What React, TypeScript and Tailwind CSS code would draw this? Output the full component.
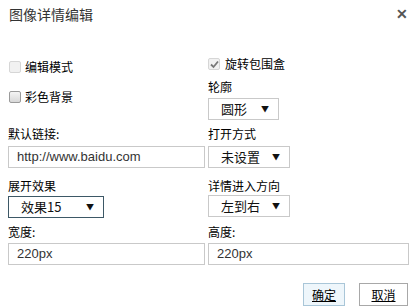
import React from "react";

const font = "font-['Noto_Sans_CJK_SC','Noto_Sans_CJK_SC',sans-serif]";

function Box({ checked, dim }: { checked?: boolean; dim?: boolean }) {
  return (
    <span
      className={`inline-flex items-center justify-center w-[12px] h-[12px] rounded-[2px] border ${
        dim ? "border-[#d6d6d6] bg-[#f1f1f1]" : "border-[#9a9a9a] bg-gradient-to-b from-[#f4f4f4] to-[#d8d8d8]"
      }`}
    >
      {checked && (
        <svg width="9" height="9" viewBox="0 0 9 9">
          <path d="M1 4.5 L3.5 7 L8 1.5" stroke="#777" strokeWidth="1.8" fill="none" />
        </svg>
      )}
    </span>
  );
}

function Select({ value, w, dark }: { value: string; w: string; dark?: boolean }) {
  return (
    <div
      className={`${w} h-[22px] flex items-center justify-between pl-[12px] pr-[9px] bg-white border ${
        dark ? "border-[#3d5866]" : "border-[#c9c9c9]"
      } text-[13px] text-[#111]`}
    >
      <span>{value}</span>
      <span className="text-[8px] leading-none">▼</span>
    </div>
  );
}

function Input({ value, w }: { value: string; w: string }) {
  return (
    <div className={`${w} h-[22px] flex items-center pl-[8px] border border-[#c9c9c9] bg-white text-[13px] text-[#333] font-['Liberation_Sans',sans-serif]`}>
      {value}
    </div>
  );
}

export default function App() {
  return (
    <div className={`w-[416px] h-[306px] bg-white ${font} text-[12px] text-black leading-[14px]`}>
      {/* header */}
      <div className="flex items-center justify-between pl-[9px] pr-[8px] pt-[6px] h-[22px]">
        <span className="text-[14px] text-[#333]">图像详情编辑</span>
        <span className="text-[14px] font-bold text-[#555] font-['Liberation_Sans',sans-serif]">✕</span>
      </div>

      {/* top section */}
      <div className="grid grid-cols-[200px_1fr] mt-[35px]">
        <div className="pl-[9px] flex flex-col">
          <label className="flex items-center gap-[4px] h-[14px] mt-[3px]">
            <Box dim />
            <span>编辑模式</span>
          </label>
          <label className="flex items-center gap-[4px] h-[14px] mt-[16px]">
            <Box />
            <span>彩色背景</span>
          </label>
        </div>
        <div className="pl-[8px] flex flex-col">
          <label className="flex items-center gap-[5px] h-[14px]">
            <Box checked dim />
            <span>旋转包围盒</span>
          </label>
          <span className="mt-[9px]">轮廓</span>
          <div className="mt-[4px]">
            <Select value="圆形" w="w-[71px]" />
          </div>
        </div>
      </div>

      {/* rows */}
      <div className="grid grid-cols-[200px_1fr] mt-[7px] gap-y-[7px]">
        <div className="pl-[8px] flex flex-col gap-[5px]">
          <span>默认链接:</span>
          <Input value="http://www.baidu.com" w="w-[197px]" />
        </div>
        <div className="pl-[8px] flex flex-col gap-[5px]">
          <span>打开方式</span>
          <Select value="未设置" w="w-[82px]" />
        </div>

        <div className="pl-[8px] flex flex-col gap-[3px] mt-[4px]">
          <span>展开效果</span>
          <Select value="效果15" w="w-[96px]" dark />
        </div>
        <div className="pl-[8px] flex flex-col gap-[2px] mt-[4px]">
          <span>详情进入方向</span>
          <Select value="左到右" w="w-[82px]" />
        </div>

        <div className="pl-[8px] flex flex-col gap-[4px]">
          <span>宽度:</span>
          <Input value="220px" w="w-[197px]" />
        </div>
        <div className="pl-[8px] flex flex-col gap-[4px]">
          <span>高度:</span>
          <Input value="220px" w="w-[201px]" />
        </div>
      </div>

      {/* footer */}
      <div className="flex justify-end gap-[14px] pr-[8px] mt-[18px]">
        <button className="w-[42px] h-[23px] border border-[#a9c6d8] bg-[#eef6fb] underline text-[12px]">确定</button>
        <button className="w-[49px] h-[23px] border border-[#a8a8a8] bg-white underline text-[12px]">取消</button>
      </div>
    </div>
  );
}
